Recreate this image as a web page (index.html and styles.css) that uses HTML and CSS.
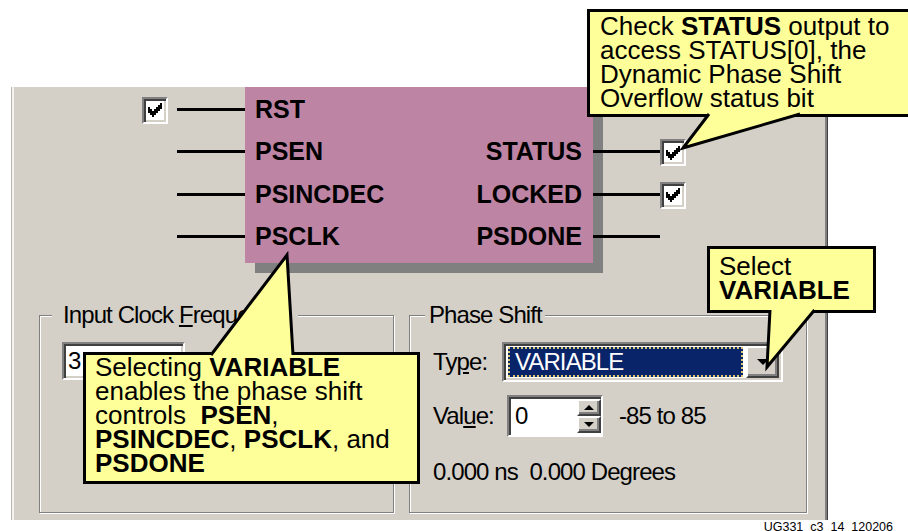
FILE: index.html
```html
<!DOCTYPE html>
<html lang="en">
<head>
  <meta charset="UTF-8">
  <meta name="viewport" content="width=device-width, initial-scale=1.0">
  <title>DCM Phase Shift - Variable</title>
  <link rel="stylesheet" href="styles.css">
</head>
<body>
  <div class="stage">
    <div class="panel">
      <div class="diagram">
        <div class="pins pins-in">
          <div class="pin">
            <span class="check"><svg viewBox="0 0 7 7"><path d="M0 2H1V3H2V4H3V3H4V2H5V1H6V0H7V3H6V4H5V5H4V6H3V7H2V6H1V5H0Z"/></svg></span>
            <span class="wire"></span>
          </div>
          <div class="pin"><span class="wire"></span></div>
          <div class="pin"><span class="wire"></span></div>
          <div class="pin"><span class="wire"></span></div>
        </div>

        <div class="block">
          <div class="port"><span>RST</span></div>
          <div class="port"><span>PSEN</span><span>STATUS</span></div>
          <div class="port"><span>PSINCDEC</span><span>LOCKED</span></div>
          <div class="port"><span>PSCLK</span><span>PSDONE</span></div>
        </div>

        <div class="pins pins-out">
          <div class="pin"></div>
          <div class="pin">
            <span class="wire"></span>
            <span class="check"><svg viewBox="0 0 7 7"><path d="M0 2H1V3H2V4H3V3H4V2H5V1H6V0H7V3H6V4H5V5H4V6H3V7H2V6H1V5H0Z"/></svg></span>
          </div>
          <div class="pin">
            <span class="wire"></span>
            <span class="check"><svg viewBox="0 0 7 7"><path d="M0 2H1V3H2V4H3V3H4V2H5V1H6V0H7V3H6V4H5V5H4V6H3V7H2V6H1V5H0Z"/></svg></span>
          </div>
          <div class="pin"><span class="wire"></span></div>
        </div>
      </div>

      <div class="groups">
        <div class="group group-clock">
          <div class="group-title">Input Clock <u>F</u>requency</div>
          <div class="field">3</div>
        </div>

        <div class="group group-shift">
          <div class="group-title">Phase Shift</div>
          <div class="row row-type">
            <span class="lbl lbl-type">Ty<u>p</u>e:</span>
            <div class="combo">
              <span class="combo-value">VARIABLE</span>
              <span class="btn combo-btn"><svg width="12" height="6" viewBox="0 0 12 6"><polygon points="0,0 12,0 6,6"/></svg></span>
            </div>
          </div>
          <div class="row row-value">
            <span class="lbl lbl-value">Val<u>u</u>e:</span>
            <div class="spin">
              <span class="spin-value">0</span>
              <span class="spin-btns">
                <span class="btn"><svg width="10" height="5" viewBox="0 0 10 5"><polygon points="5,0 10,5 0,5"/></svg></span>
                <span class="btn"><svg width="10" height="5" viewBox="0 0 10 5"><polygon points="0,0 10,0 5,5"/></svg></span>
              </span>
            </div>
            <span class="range">-85 to 85</span>
          </div>
          <div class="row row-info">0.000 ns&nbsp; 0.000 Degrees</div>
        </div>
      </div>
    </div>

    <div class="figure-id">UG331_c3_14_120206</div>

    <!-- callouts sit over the dialog -->
    <div class="callout callout-status">Check <b>STATUS</b> output to<br>access STATUS[0], the<br>Dynamic Phase Shift<br>Overflow status bit</div>
    <div class="callout callout-variable">Selecting <b>VARIABLE</b><br>enables the phase shift<br>controls&nbsp; <b>PSEN</b>,<br><b>PSINCDEC</b>, <b>PSCLK</b>, and<br><b>PSDONE</b></div>
    <div class="callout callout-select">Select<br><b>VARIABLE</b></div>

    <svg class="tails" width="908" height="531" viewBox="0 0 908 531">
      <polygon points="709,114 683,148 800,114"/>
      <polyline points="709,114 683,148 800,114"/>
      <polygon points="211,355 287,255 293,355"/>
      <polyline points="211,355 287,255 293,355"/>
      <polygon points="770,310 767,367 814.5,310"/>
      <polyline points="770,310 767,367 814.5,310"/>
    </svg>
  </div>
</body>
</html>
```

FILE: styles.css
```css
* {
  box-sizing: border-box;
}

html, body {
  margin: 0;
  padding: 0;
  background: #fff;
  overflow: hidden;
}

.stage {
  position: relative;
  width: 908px;
  height: 531px;
  overflow: hidden;
  font-family: "Liberation Sans", Arial, sans-serif;
  color: #000;
}

/* dialog window */
.panel {
  margin: 87px 0 0 11px;
  width: 817px;
  height: 433px;
  padding: 0 3px;
  background: #d4d0c8;
  box-shadow: inset 1px 0 #bcb8b0, inset 3px 0 #f4f2ee, inset -1px 0 #404040, inset -3px 0 #808080;
}

/* block symbol */
.diagram {
  display: flex;
  height: 176px;
}

.pins {
  display: flex;
  flex-direction: column;
  padding-top: 1px;
}

.pins-in {
  width: 231px;
  align-items: flex-end;
}

.pins-out {
  flex: 1;
}

.pin {
  height: 42.5px;
  display: flex;
  align-items: center;
}

.wire {
  width: 68px;
  height: 3px;
  background: #000;
}

.pins-in .check {
  margin-right: 9px;
}

.pins-out .wire {
  width: 67px;
}

.check {
  width: 26px;
  height: 27px;
  margin-top: 2px;
  border: 2px solid;
  border-color: #808080 #fff #fff #808080;
  box-shadow: inset 2px 2px #404040, inset -2px -2px #d4d0c8;
  background: #fff;
  display: flex;
  align-items: center;
  justify-content: center;
}

.check svg {
  width: 14px;
  height: 14px;
  shape-rendering: crispEdges;
}

.block {
  width: 348px;
  height: 176px;
  padding: 1px 11px 0 10px;
  background: #be84a3;
  box-shadow: 10px 10px 0 #808080;
}

.port {
  height: 42.5px;
  display: flex;
  align-items: center;
  justify-content: space-between;
  font-size: 25px;
  font-weight: bold;
  line-height: 1;
}

/* group boxes */
.groups {
  display: flex;
  gap: 15px;
  margin-top: 52px;
  padding-left: 25px;
  font-size: 24px;
  letter-spacing: -0.9px;
}

.group {
  height: 198px;
  border: 1px solid #808080;
  box-shadow: inset 1px 1px #fff, 1px 1px #fff;
  padding-left: 22px;
}

.group-clock {
  width: 355px;
}

.group-shift {
  width: 398px;
  padding-left: 23px;
}

.group-title {
  width: max-content;
  margin: -12px 0 0 -10px;
  padding: 0 14px 0 11px;
  background: #d4d0c8;
  line-height: 22px;
}

.group-shift .group-title {
  margin-left: -8px;
  padding: 0 3px 0 4px;
}

.field {
  margin-top: 16px;
  width: 123px;
  height: 38px;
  padding-left: 4px;
  line-height: 34px;
  border: 2px solid;
  border-color: #808080 #fff #fff #808080;
  box-shadow: inset 2px 2px #404040, inset -2px -2px #d4d0c8;
  background: #fff;
}

.row {
  display: flex;
  align-items: center;
}

.row-type {
  margin-top: 16px;
  height: 40px;
}

.row-value {
  margin-top: 13px;
  height: 42px;
}

.row-info {
  margin-top: 23px;
  line-height: 24px;
}

.lbl-type {
  width: 69px;
}

.lbl-value {
  width: 74px;
}

.combo {
  display: flex;
  width: 281px;
  height: 40px;
  padding: 2px;
  border: 2px solid;
  border-color: #808080 #fff #fff #808080;
  box-shadow: inset 2px 2px #404040, inset -2px -2px #d4d0c8;
  background: #fff;
}

.combo-value {
  flex: 1;
  margin: 1px 3px 1px 2px;
  padding-left: 7px;
  line-height: 30px;
  background: #0a246a;
  color: #fff;
  outline: 2px dotted #d9c66e;
  outline-offset: -2px;
}

.btn {
  display: flex;
  align-items: center;
  justify-content: center;
  background: #d4d0c8;
  border: 2px solid;
  border-color: #fff #404040 #404040 #fff;
  box-shadow: inset -2px -2px #808080;
}

.combo-btn {
  width: 33px;
}

.spin {
  display: flex;
  width: 96px;
  height: 42px;
  padding: 2px 0 2px 2px;
  border: 2px solid;
  border-color: #808080 #fff #fff #808080;
  box-shadow: inset 2px 2px #404040;
  background: #fff;
}

.spin-value {
  flex: 1;
  padding-left: 4px;
  line-height: 34px;
}

.spin-btns {
  width: 24px;
  display: flex;
  flex-direction: column;
}

.spin-btns .btn {
  flex: 1;
}

.range {
  margin-left: 16px;
}

.figure-id {
  text-align: right;
  padding-right: 15px;
  font-size: 12.5px;
  line-height: 14px;
}

/* yellow callouts */
.callout {
  position: absolute;
  border: 3px solid #000;
  background: #ffff99;
  font-size: 26px;
  line-height: 24px;
  padding-left: 9px;
  white-space: nowrap;
}

.callout-status {
  left: 587px;
  top: 9px;
  width: 333px;
  height: 108px;
  padding: 2px 0 0 10px;
}

.callout-variable {
  left: 83px;
  top: 352px;
  width: 337px;
  height: 132px;
  padding-top: 0;
}

.callout-select {
  left: 707px;
  top: 246px;
  width: 169px;
  height: 67px;
  padding-top: 5px;
}

.tails {
  position: absolute;
  left: 0;
  top: 0;
  pointer-events: none;
}

.tails polygon {
  fill: #ffff99;
}

.tails polyline {
  fill: none;
  stroke: #000;
  stroke-width: 3;
  stroke-linejoin: miter;
}
```
